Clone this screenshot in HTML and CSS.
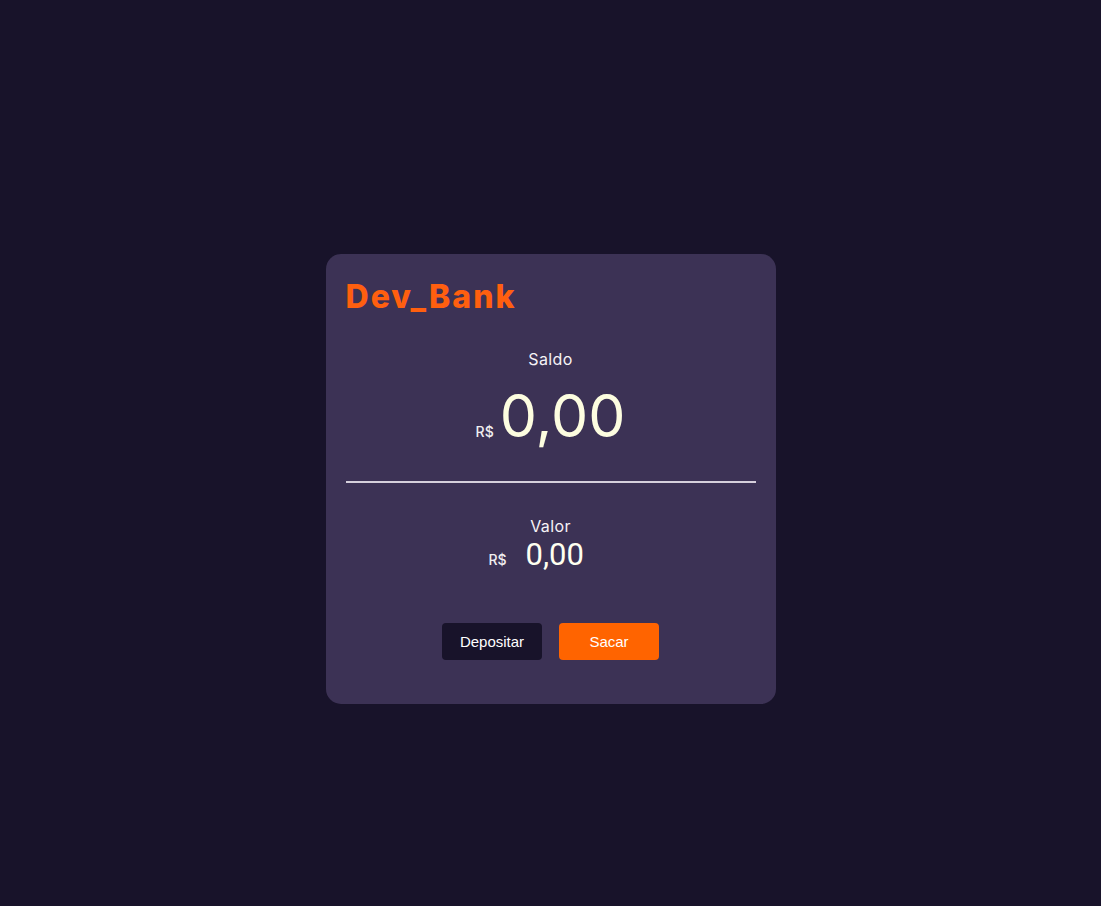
FILE: index.html
```html
<!DOCTYPE html>
<html lang="pt-BR">
<head>
<meta charset="utf-8">
<title>Dev_Bank</title>
<link rel="stylesheet" href="styles.css">
</head>
<body>
<main class="card">
  <h1 class="brand">Dev_Bank</h1>
  <section class="balance">
    <p class="label">Saldo</p>
    <div class="balance-value"><span class="currency">R$</span><span class="amount">0,00</span></div>
  </section>
  <hr class="divider">
  <section class="value">
    <p class="label">Valor</p>
    <div class="value-row"><span class="currency">R$</span><span class="value-amount">0,00</span></div>
  </section>
  <div class="actions">
    <button class="btn btn-dark">Depositar</button>
    <button class="btn btn-orange">Sacar</button>
  </div>
</main>
</body>
</html>
```
FILE: styles.css
```css
* { box-sizing: border-box; }
html, body { margin: 0; }
body {
  background: #18132a;
  min-height: 100vh;
  padding-top: 52px;
  display: flex;
  align-items: center;
  justify-content: center;
  font-family: "Inter", "Open Sans", sans-serif;
}
.card {
  width: 450px;
  height: 450px;
  background: #3c3255;
  border-radius: 15px;
  padding: 20px;
  display: flex;
  flex-direction: column;
}
.brand {
  margin: 0;
  color: #ff5f0f;
  font-family: "Inter", sans-serif;
  font-weight: 800;
  font-size: 32px;
  line-height: 46px;
  letter-spacing: 2px;
}
.balance {
  text-align: center;
  margin-top: 29px;
}
.label {
  margin: 0;
  color: #f7f3f7;
  font-size: 16px;
  line-height: 20px;
  letter-spacing: 0.4px;
}
.balance-value {
  display: flex;
  justify-content: center;
  align-items: baseline;
  gap: 6px;
  margin-top: 7px;
}
.currency {
  color: #f0eef0;
  font-size: 14px;
  font-weight: 500;
}
.amount {
  color: #fdfde0;
  font-family: "Inter", sans-serif;
  font-size: 59px;
  line-height: 80px;
}
.divider {
  margin: 25px 0 0;
  border: 0;
  height: 2px;
  background: #d6d0dc;
}
.value {
  text-align: center;
  margin-top: 33px;
}
.value-row {
  display: flex;
  justify-content: center;
  align-items: baseline;
  gap: 19px;
  margin-top: 2px;
}
.value-amount {
  width: 87px;
  text-align: left;
  color: #fffff0;
  font-family: "Roboto", sans-serif;
  font-size: 31px;
  line-height: 34px;
}
.actions {
  display: flex;
  justify-content: center;
  gap: 17px;
  margin-top: 51px;
}
.btn {
  width: 100px;
  height: 37px;
  border: 0;
  border-radius: 4px;
  color: #fff;
  font-family: "Liberation Sans", Arial, sans-serif;
  font-size: 15px;
}
.btn-dark { background: #18132a; }
.btn-orange { background: #ff6400; }
```
